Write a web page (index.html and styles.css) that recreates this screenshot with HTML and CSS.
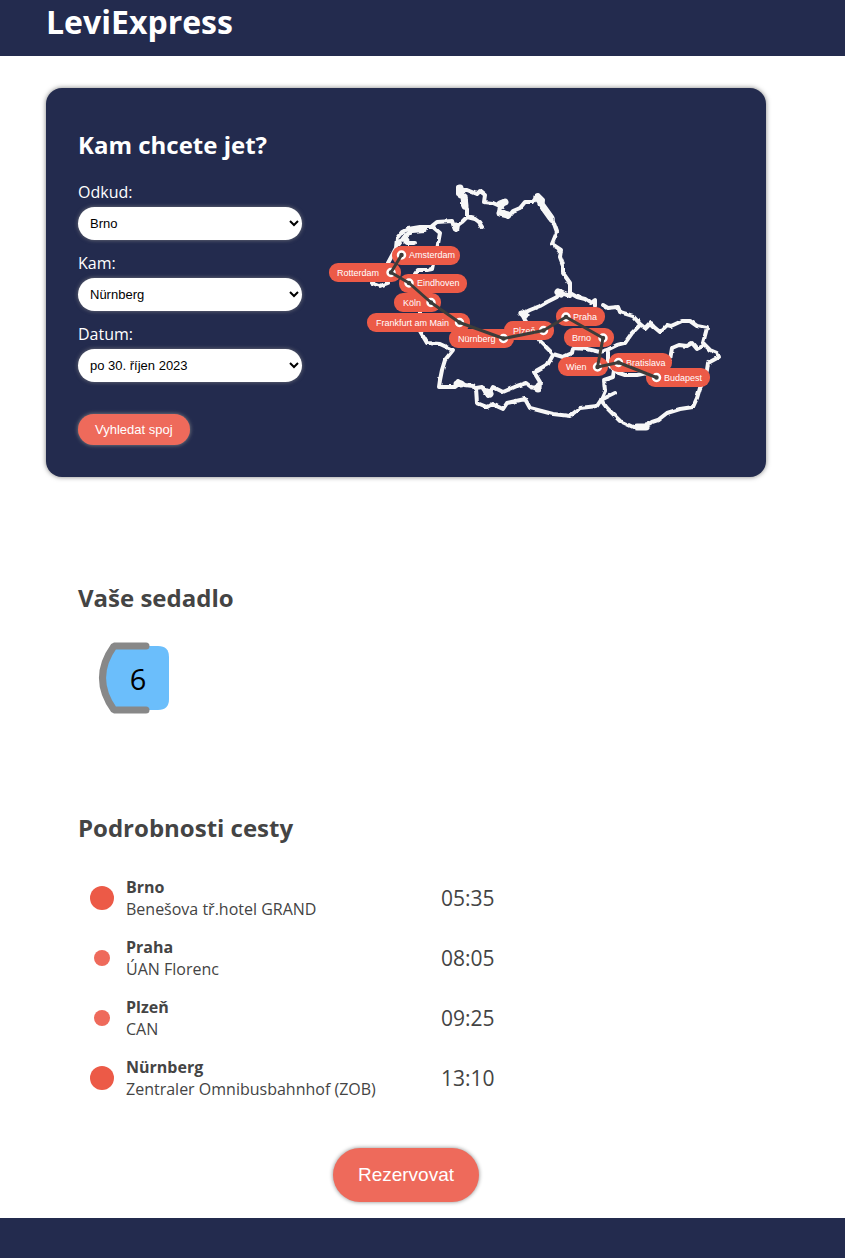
FILE: index.html
```html
<!DOCTYPE html>
<html lang="cs">
<head>
<meta charset="utf-8">
<title>LeviExpress</title>
<link rel="stylesheet" href="styles.css">
</head>
<body>
<header class="header"><h1 class="header__title">LeviExpress</h1></header>
<main class="main">
  <section class="picker">
    <form class="picker__form">
      <h2 class="picker__heading">Kam chcete jet?</h2>
      <div class="field">
        <label for="from">Odkud:</label>
        <select id="from"><option>Brno</option></select>
      </div>
      <div class="field">
        <label for="to">Kam:</label>
        <select id="to"><option>Nürnberg</option></select>
      </div>
      <div class="field">
        <label for="date">Datum:</label>
        <select id="date"><option>po 30. říjen 2023</option></select>
      </div>
      <button class="btn" type="button">Vyhledat spoj</button>
    </form>
    <svg class="map" viewBox="326 120 408 325" role="img" aria-label="Mapa spojů">
      <defs>
        <filter id="rough" filterUnits="userSpaceOnUse" x="326" y="170" width="408" height="275">
          <feTurbulence type="fractalNoise" baseFrequency="0.16" numOctaves="1" seed="4" result="n"/>
          <feDisplacementMap in="SourceGraphic" in2="n" scale="3" xChannelSelector="R" yChannelSelector="G"/>
        </filter>
      </defs>
      <g class="map__borders" filter="url(#rough)">
        <path d="M372 283L380 286L388 283M388 263L396 248L397 238L402 232L408 229L420 227L433 227L440 233L438 244L437 250M433 264L432 269L427 270L418 270L415 274M399 244L405 236L412 231L425 230M403 240L407 243L415 243M405 236L409 243"/>
        <path d="M432 226L437 222L452 221L454 227L456 230L458 225L462 222L467 217L475 219L479 222L482 227M467 217L467 209L463 205L466 200L463 196L458 194L458 187L463 190L467 190L477 194L480 191L485 195L484 202L493 203L502 207L504 201L500 204L499 214L504 212L508 217L513 211L520 208L525 202L533 202L538 195L543 200L541 208L547 211L552 218L557 232L552 244L561 250L560 257L563 265L563 273L570 283L570 295"/>
        <path class="map__coast" d="M460 188L461 195M464 197L465 206M537 197L541 202M541 204L551 218M500 204L505 202M500 213L508 215M456 226L456 228M558 292L561 294M457 384L461 384M538 386L538 389M487 392L490 394M522 313L525 315M637 427L646 427"/>
        <path d="M570 296L559 292L557 297L547 302L540 306L530 310L522 314L525 320L530 328L540 341L553 354L563 357L572 353L573 348L587 349L600 352L607 350L617 345L625 343L632 333L640 325"/>
        <path d="M570 293L577 297L585 299L591 303L595 300L595 306M603 305L608 308L618 307L620 312L633 316L640 324L645 328L650 323L654 327L660 332L667 325L671 326L682 321L690 321L697 326L707 328L703 343L710 350L717 353L719 357L708 363L707 370L704 380L700 388L697 398L693 407L680 409L667 413L658 420L652 422L643 427L633 427L620 421L607 408L601 400L605 391L604 380L613 377L614 370L608 362L608 352"/>
        <path d="M615 393L601 400L597 406L580 408L570 416L553 414L530 408L525 399L507 403L503 409L492 404L487 407L477 403L476 388L482 387L488 396L493 387L503 392L517 386L526 383L531 387L539 389L540 382L534 372L548 364L553 355"/>
        <path d="M616 372L625 375L637 375L647 373M670 360L672 348L679 345L687 346L692 343L697 349L703 346M415 293L420 296L420 313"/>
        <path d="M420 331L427 343L440 344L453 350L445 360L442 370L440 380L439 387L455 387L458 381L465 385L473 386L476 390"/>
      </g>
      <g class="map__pills">
        <rect x="392" y="246" width="68" height="19" rx="9"/>
        <rect x="329" y="263" width="72" height="19" rx="9"/>
        <rect x="399" y="274" width="68" height="19" rx="9"/>
        <rect x="394" y="293" width="47" height="19" rx="9"/>
        <rect x="367" y="313" width="103" height="19" rx="9"/>
        <rect x="449" y="329" width="65" height="19" rx="9"/>
        <rect x="504" y="321" width="50" height="19" rx="9"/>
        <rect x="556" y="307" width="49" height="19" rx="9"/>
        <rect x="564" y="328" width="50" height="19" rx="9"/>
        <rect x="558" y="357" width="50" height="19" rx="9"/>
        <rect x="609" y="353" width="63" height="19" rx="9"/>
        <rect x="646" y="368" width="64" height="19" rx="9"/>
      </g>
      <g class="map__names">
        <text x="409" y="258">Amsterdam</text>
        <text x="337" y="276">Rotterdam</text>
        <text x="417" y="286">Eindhoven</text>
        <text x="403" y="306">Köln</text>
        <text x="376" y="326">Frankfurt am Main</text>
        <text x="458" y="342">Nürnberg</text>
        <text x="513" y="334">Plzeň</text>
        <text x="573" y="320">Praha</text>
        <text x="572" y="341">Brno</text>
        <text x="566" y="370">Wien</text>
        <text x="626" y="366">Bratislava</text>
        <text x="664" y="381">Budapest</text>
      </g>
      <g class="map__stops">
        <circle cx="401.5" cy="255" r="3.5"/><circle cx="391" cy="272.5" r="3.5"/>
        <circle cx="409" cy="283" r="3.5"/><circle cx="431" cy="302.5" r="3.5"/>
        <circle cx="459.5" cy="322.5" r="3.5"/><circle cx="503.5" cy="338.5" r="3.5"/>
        <circle cx="543.5" cy="330.5" r="3.5"/><circle cx="566" cy="317" r="3.5"/>
        <circle cx="603" cy="338" r="3.5"/><circle cx="597.5" cy="367" r="3.5"/>
        <circle cx="618.5" cy="362.5" r="3.5"/><circle cx="656.5" cy="377.5" r="3.5"/>
      </g>
      <path class="map__route" d="M401.5 255L391 272.5L409 283L431 302.5L459.5 322.5L503.5 338.5L543.5 330.5L566 317L603 338L597.5 367L618.5 362.5L656.5 377.5"/>
    </svg>
  </section>

  <section class="seat">
    <h2>Vaše sedadlo</h2>
    <svg class="seat__icon" viewBox="0 0 72 72" role="img" aria-label="Sedadlo 6">
      <path class="seat__base" d="M16 4H60Q71 4 71 15V57Q71 68 60 68H16Q-4 36 16 4Z"/>
      <path class="seat__back" d="M48 4H16Q-7 36 16 68H48"/>
      <text class="seat__number" x="40" y="48">6</text>
    </svg>
  </section>

  <section class="journey">
    <h2>Podrobnosti cesty</h2>
    <ul class="stops">
      <li class="stop"><span class="stop__dot stop__dot--end"></span><div><strong>Brno</strong><p>Benešova tř.hotel GRAND</p></div><time>05:35</time></li>
      <li class="stop"><span class="stop__dot"></span><div><strong>Praha</strong><p>ÚAN Florenc</p></div><time>08:05</time></li>
      <li class="stop"><span class="stop__dot"></span><div><strong>Plzeň</strong><p>CAN</p></div><time>09:25</time></li>
      <li class="stop"><span class="stop__dot stop__dot--end"></span><div><strong>Nürnberg</strong><p>Zentraler Omnibusbahnhof (ZOB)</p></div><time>13:10</time></li>
    </ul>
  </section>
  <div class="actions"><button class="btn btn--big" type="button">Rezervovat</button></div>
</main>
<footer class="footer"></footer>
</body>
</html>
```
FILE: styles.css
```css
* { box-sizing: border-box; }
body {
  margin: 0;
  font: 16px/22px "Open Sans", sans-serif;
  color: #444;
  background: #fff;
}
h1, h2, p, ul { margin: 0; padding: 0; }
h2 { font-size: 24px; line-height: 33px; }

.header { background: #232b4e; color: #fff; padding: 0 46px 12px; }
.header__title { font-size: 32px; line-height: 44px; }

.main { max-width: 812px; padding: 32px 46px 16px; }

.picker {
  display: flex;
  gap: 24px;
  padding: 32px;
  background: #232b4e;
  color: #fff;
  border-radius: 16px;
  box-shadow: 0 0 5px rgba(0, 0, 0, .5);
}
.picker__form {
  flex: 0 0 224px;
  display: flex;
  flex-direction: column;
  align-items: flex-start;
  gap: 12px;
  padding-top: 8px;
}
.picker__heading { margin-bottom: 8px; }
.field { display: flex; flex-direction: column; gap: 4px; width: 100%; }
.field select {
  height: 33px;
  padding: 8px 0 8px 8px;
  border: 0;
  border-radius: 17px;
  background: #fff;
  color: #000;
  font: 13px "Liberation Sans", Arial, sans-serif;
  box-shadow: 0 0 4px rgba(136, 136, 136, .8);
}
.btn {
  margin-top: 20px;
  padding: 8px 17px;
  border: 0;
  border-radius: 27px;
  background: #ee6a5b;
  color: #fff;
  font: 13px/15px "Liberation Sans", Arial, sans-serif;
  box-shadow: 0 0 4px #888;
}
.btn--big { margin: 0; padding: 16px 25px; font-size: 19px; line-height: 22px; }

.map { flex: 1; min-width: 0; }
.map__borders { fill: none; stroke: #f7f7f7; stroke-width: 4; stroke-linejoin: round; stroke-linecap: round; }
.map__coast { stroke-width: 7; }
.map__pills { fill: #ec5a47; }
.map__names { fill: #fff; font: 9px "Liberation Sans", Arial, sans-serif; }
.map__stops { fill: #3c3c3a; stroke: #fff; stroke-width: 2.5; }
.map__route { fill: none; stroke: #3c3c3a; stroke-width: 3; stroke-linejoin: round; stroke-linecap: round; }

.seat { padding: 104px 32px 0; }
.seat__icon { display: block; width: 72px; height: 72px; margin: 28px 0 0 20px; }
.seat__base { fill: #6bbefb; }
.seat__back { fill: none; stroke: #888; stroke-width: 7; stroke-linecap: round; stroke-linejoin: bevel; }
.seat__number { font-size: 29px; text-anchor: middle; fill: #000; }

.journey { padding: 97px 32px 0; }
.stops { display: grid; gap: 16px; padding: 32px 0 48px; list-style: none; }
.stop {
  display: grid;
  grid-template-columns: 48px 315px auto;
  align-items: center;
  justify-content: start;
}
.stop strong { display: block; }
.stop time { font-size: 21px; }
.stop__dot { justify-self: center; width: 16px; height: 16px; border-radius: 50%; background: #ee6a5b; }
.stop__dot--end { width: 24px; height: 24px; background: #ec5a47; }

.actions { display: flex; justify-content: center; }
.footer { height: 40px; background: #232b4e; }
```
